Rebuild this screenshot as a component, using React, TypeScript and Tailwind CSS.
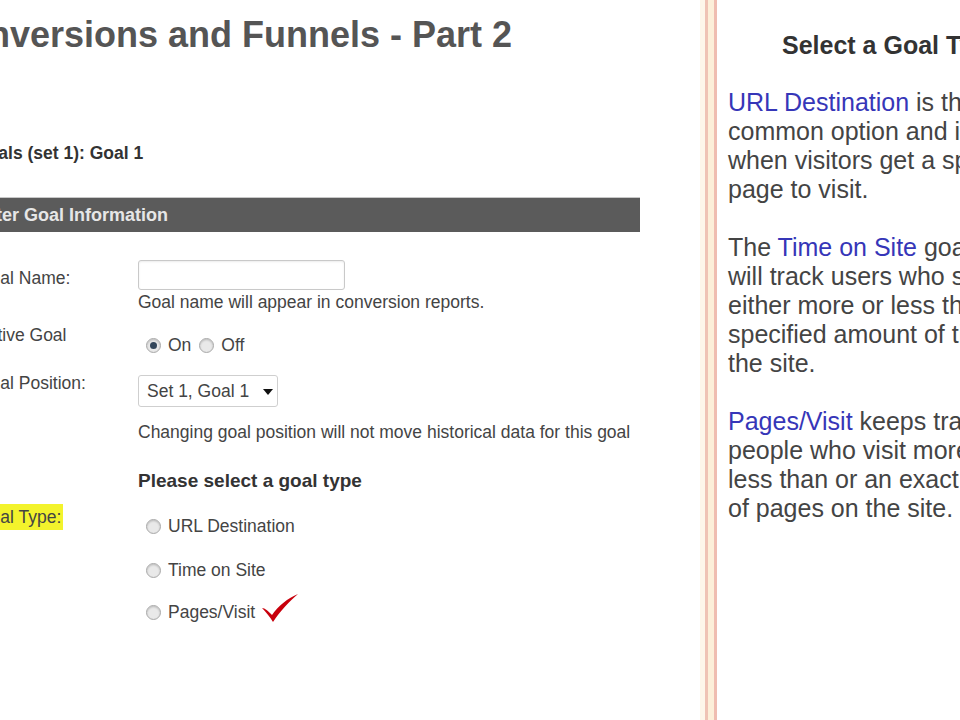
import React from "react";

function Radio({ checked = false }: { checked?: boolean }) {
  return (
    <span className="inline-flex w-[15px] h-[15px] shrink-0 items-center justify-center rounded-full border border-[#a9a9a9] bg-[#e9e9e9] shadow-[inset_0_1px_2px_rgba(0,0,0,0.2)]">
      {checked && <span className="w-[7px] h-[7px] rounded-full bg-[#33465a]" />}
    </span>
  );
}

function Check() {
  return (
    <svg width="38" height="30" viewBox="0 0 38 30" className="ml-[6px] mt-[-9px] mb-[-1px]">
      <path
        d="M1 15 C4 15 7 18 11 22 C17 13 27 5 37 1 C29 8 19 18 12 29 C9 24 5 19 1 15 Z"
        fill="#c8000c"
      />
    </svg>
  );
}

export default function App() {
  return (
    <div className="w-[960px] h-[720px] overflow-hidden bg-white flex font-['Liberation_Sans',Arial,sans-serif]">
      {/* Left panel */}
      <div className="w-[700px] shrink-0 overflow-hidden">
        <div className="w-[723px] ml-[-23px]">
          <div className="ml-[-37px] mt-[15px] text-[36px] leading-[40px] font-bold text-[#555] whitespace-nowrap">
            Conversions and Funnels - Part 2
          </div>
          <div className="mt-[88px] ml-[-3px] text-[17.5px] leading-[20px] font-bold text-[#333] whitespace-nowrap">
            Goals (set 1): Goal 1
          </div>
          <div className="mt-[34px] w-[663px] h-[35px] bg-[#5b5b5b] border-t border-[#c8c8c8] flex items-center">
            <span className="ml-[-4px] text-[18px] font-bold text-[#e6e6e6] whitespace-nowrap">
              Enter Goal Information
            </span>
          </div>

          <div className="mt-[8px] flex">
            {/* labels */}
            <div className="w-[161px] shrink-0 flex flex-col text-[17.5px] leading-[20px] text-[#444] whitespace-nowrap">
              <div className="mt-[28px]">Goal Name:</div>
              <div className="mt-[37px]">Active Goal</div>
              <div className="mt-[28px]">Goal Position:</div>
              <div className="mt-[114px]">
                <span className="bg-[#f3f32c] py-[3px] pr-[2px]">Goal Type:</span>
              </div>
            </div>
            {/* content */}
            <div className="flex flex-col text-[17.5px] leading-[20px] text-[#444] whitespace-nowrap">
              <div className="mt-[20px] w-[207px] h-[30px] border border-[#c9c9c9] rounded-[3px] bg-white shadow-[inset_0_1px_2px_rgba(0,0,0,0.08)]" />
              <div className="mt-[2px]">Goal name will appear in conversion reports.</div>
              <div className="mt-[23px] flex items-center pl-[8px]">
                <Radio checked />
                <span className="ml-[7px]">On</span>
                <span className="ml-[8px] inline-flex"><Radio /></span>
                <span className="ml-[7px]">Off</span>
              </div>
              <div className="mt-[20px] w-[140px] h-[32px] border border-[#cfcfcf] rounded-[3px] bg-white flex items-center pl-[8px]">
                <span>Set 1, Goal 1</span>
                <svg width="10" height="6" viewBox="0 0 10 6" className="ml-[14px] mt-[1px]">
                  <path d="M0 0 L10 0 L5 6 Z" fill="#111" />
                </svg>
              </div>
              <div className="mt-[15px]">Changing goal position will not move historical data for this goal</div>
              <div className="mt-[28px] text-[19px] leading-[22px] font-bold text-[#333]">
                Please select a goal type
              </div>
              <div className="mt-[24px] flex items-center pl-[8px]">
                <Radio />
                <span className="ml-[7px]">URL Destination</span>
              </div>
              <div className="mt-[24px] flex items-center pl-[8px]">
                <Radio />
                <span className="ml-[7px]">Time on Site</span>
              </div>
              <div className="mt-[22px] flex items-center pl-[8px]">
                <Radio />
                <span className="ml-[7px]">Pages/Visit</span>
                <Check />
              </div>
            </div>
          </div>
        </div>
      </div>

      {/* Divider */}
      <div className="flex shrink-0 h-full">
        <div className="w-[5px] bg-[#fdf6ea]" />
        <div className="w-[3px] bg-[#efc3b5]" />
        <div className="w-[6px] bg-[#fcefd9]" />
        <div className="w-[3px] bg-[#efbdb1]" />
      </div>

      {/* Right panel */}
      <div className="flex-1 overflow-hidden pl-[11px] text-[25px] leading-[29px] text-[#444] whitespace-nowrap">
        <div className="mt-[31px] ml-[54px] font-bold text-[#333]">Select a Goal Type</div>
        <div className="mt-[28px]">
          <span className="text-[#3636b8]">URL Destination</span> is the most
          <br />
          common option and is used
          <br />
          when visitors get a specific
          <br />
          page to visit.
        </div>
        <div className="mt-[29px]">
          The <span className="text-[#3636b8]">Time on Site</span> goal
          <br />
          will track users who stay
          <br />
          either more or less than a
          <br />
          specified amount of time on
          <br />
          the site.
        </div>
        <div className="mt-[29px]">
          <span className="text-[#3636b8]">Pages/Visit</span> keeps track of
          <br />
          people who visit more or
          <br />
          less than or an exact number
          <br />
          of pages on the site.
        </div>
      </div>
    </div>
  );
}
